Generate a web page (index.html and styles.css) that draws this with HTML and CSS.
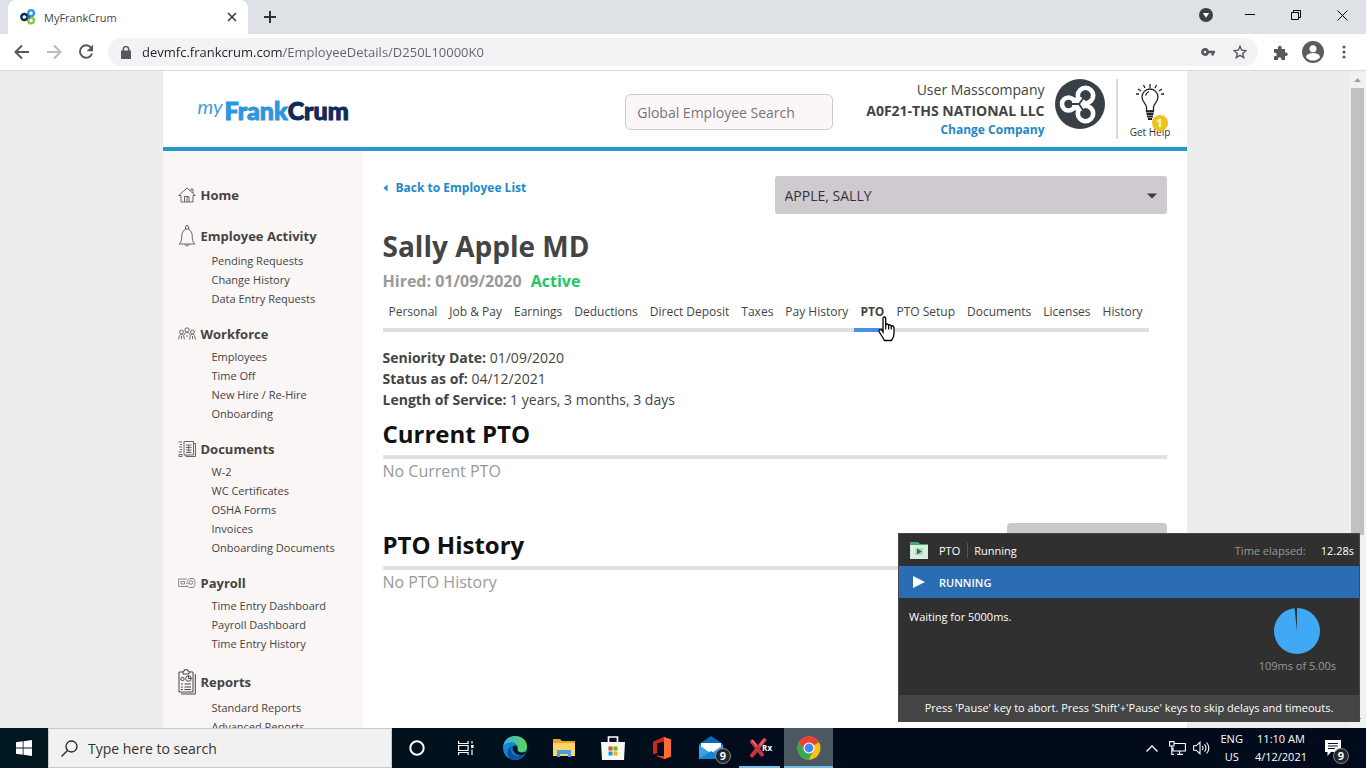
FILE: index.html
```html
<!DOCTYPE html>
<html lang="en">
<head>
<meta charset="utf-8">
<title>MyFrankCrum</title>
<link rel="stylesheet" href="styles.css">
</head>
<body>
<div class="desktop">
  <header class="tabstrip">
    <div class="browser-tab">
      <svg class="favicon" width="16" height="16" viewBox="0 0 16 16" fill="none" stroke-width="2.4"><circle cx="11" cy="4.200" r="2.900" stroke="#2f9be0"/><circle cx="11" cy="11.500" r="2.900" stroke="#8cc63f"/><circle cx="4.300" cy="8" r="3" stroke="#12284c"/><path d="M6.500 8h4" stroke="#1c6aa8"/></svg>
      <span class="tab-title">MyFrankCrum</span>
      <button class="bare" aria-label="Close tab"><svg width="10" height="10" viewBox="0 0 10 10" stroke="#3c4043" stroke-width="1.700"><path d="M1 1l8 8M9 1l-8 8"/></svg></button>
    </div>
    <button class="bare new-tab" aria-label="New tab"><svg width="14" height="14" viewBox="0 0 14 14" stroke="#303134" stroke-width="2"><path d="M7 1v12M1 7h12"/></svg></button>
    <div class="window-controls">
      <button class="bare" aria-label="Search tabs"><svg width="14" height="14" viewBox="0 0 14 14"><circle cx="7" cy="7" r="7" fill="#3c4043"/><path d="M3.800 5h6.400L7 9.800z" fill="#fff"/></svg></button>
      <button class="bare" aria-label="Minimize"><svg width="10" height="10" viewBox="0 0 10 10"><path d="M0 4.500h10" stroke="#000"/></svg></button>
      <button class="bare" aria-label="Restore"><svg width="10" height="10" viewBox="0 0 10 10" fill="none" stroke="#000"><path d="M.5 2.500h7v7h-7zM2.500 2.500v-2h7v7h-2"/></svg></button>
      <button class="bare" aria-label="Close"><svg width="11" height="11" viewBox="0 0 11 11" stroke="#000"><path d="M.5.5l10 10M10.500.5l-10 10"/></svg></button>
    </div>
  </header>

  <div class="toolbar">
    <div class="nav-buttons">
      <button class="bare" aria-label="Back"><svg width="16" height="16" viewBox="0 0 16 16" fill="none" stroke="#55585c" stroke-width="2"><path d="M15 8H2M8 1.500L1.500 8 8 14.500"/></svg></button>
      <button class="bare" aria-label="Forward"><svg width="16" height="16" viewBox="0 0 16 16" fill="none" stroke="#b9bbbe" stroke-width="2"><path d="M1 8h13M8 1.500L14.500 8 8 14.500"/></svg></button>
      <button class="bare" aria-label="Reload"><svg width="16" height="16" viewBox="0 0 16 16"><path d="M13.200 4A6.200 6.200 0 1 0 14 9.500" fill="none" stroke="#55585c" stroke-width="2"/><path d="M15 .8v6.400H8.600z" fill="#55585c"/></svg></button>
    </div>
    <div class="omnibox">
      <svg width="10" height="13" viewBox="0 0 10 13"><path d="M0 4.500h10V13H0z" fill="#55585c"/><path d="M2.300 5V3.300a2.700 2.700 0 0 1 5.400 0V5" fill="none" stroke="#55585c" stroke-width="1.500"/></svg>
      <input class="address" type="text" aria-label="Address" value="devmfc.frankcrum.com/EmployeeDetails/D250L10000K0">
      <button class="bare" aria-label="Passwords"><svg width="14" height="10" viewBox="0 0 14 10" fill="none" stroke="#55585c"><circle cx="4" cy="5" r="2.600" stroke-width="2.600"/><path d="M6.500 5H14M11.700 5v3.500" stroke-width="2.500"/></svg></button>
      <button class="bare" aria-label="Bookmark"><svg width="14" height="14" viewBox="0 0 14 14" fill="none" stroke="#55585c" stroke-width="1.400"><path d="M7 1.300l1.700 3.900 4.200.4-3.200 2.800 1 4.100L7 10.300l-3.700 2.200 1-4.100L1.100 5.600l4.200-.4z"/></svg></button>
    </div>
    <div class="browser-actions">
      <button class="bare" aria-label="Extensions"><svg width="15" height="15" viewBox="0 0 15 15" fill="#55585c"><path d="M1 4h4V2.600a1.800 1.800 0 0 1 3.600 0V4H12v3.500h1a1.800 1.800 0 0 1 0 3.600h-1V15H8.400v-1a1.700 1.700 0 0 0-3.400 0v1H1v-3.700h1a1.800 1.800 0 0 0 0-3.600H1z"/></svg></button>
      <button class="bare" aria-label="Profile"><svg width="22" height="22" viewBox="0 0 22 22"><circle cx="11" cy="11" r="11" fill="#5a5d61"/><circle cx="11" cy="7.700" r="3.500" fill="#fff"/><path d="M4 16.200c0-3 4.500-4.200 7-4.200s7 1.200 7 4.200a9 9 0 0 1-14 0z" fill="#fff"/></svg></button>
      <button class="bare" aria-label="Menu"><svg width="4" height="14" viewBox="0 0 4 14" fill="#55585c"><circle cx="2" cy="2" r="1.500"/><circle cx="2" cy="7" r="1.500"/><circle cx="2" cy="12" r="1.500"/></svg></button>
    </div>
  </div>

  <div class="viewport">
    <div class="page">
      <header class="site-header">
        <a class="logo" href="#"><span class="logo-my">my</span><span class="logo-frank">Frank</span><span class="logo-crum">Crum</span></a>
        <input class="global-search" type="search" aria-label="Global Employee Search" placeholder="Global Employee Search">
        <div class="account">
          <span>User Masscompany</span>
          <strong>A0F21-THS NATIONAL LLC</strong>
          <a class="link" href="#">Change Company</a>
        </div>
        <svg class="brand" width="50" height="50" viewBox="0 0 50 50"><circle cx="25" cy="25" r="25" fill="#384047"/><g fill="none" stroke="#fff" stroke-width="4.600"><circle cx="30.500" cy="16.500" r="7.700"/><circle cx="30.500" cy="34.500" r="7.700"/><circle cx="13.500" cy="25" r="6.500"/></g><path d="M17 19l9-1 8 7-8 7-9-1z" fill="#fff"/><g fill="#384047"><circle cx="30.500" cy="16.500" r="3.700"/><circle cx="30.500" cy="34.500" r="3.700"/><circle cx="13.500" cy="25" r="3.700"/></g><path d="M14 25h10l6-8M24 25l6 9" fill="none" stroke="#384047" stroke-width="1.800"/></svg>
        <a class="help" href="#">
          <svg width="30" height="38" viewBox="0 0 30 38" fill="none" stroke="#222" stroke-width="1.300"><path d="M11.500 28v-4c0-3-4.500-5-4.500-10a8 8 0 0 1 16 0c0 5-4.500 7-4.500 10v4zM10.500 12.500q1-3 3.500-4"/><path d="M15 1v4M8.500 2l1.500 3M21.500 2L20 5M3 6l3 2M27 6l-3 2M1 11h3M26 11h3"/><path d="M11 28.500h8M11.500 31h7M12 33.500h6" stroke-width="2"/><path d="M13 36h4" stroke-width="2"/></svg>
          <span>Get Help</span>
          <b class="help-badge">1</b>
        </a>
      </header>

      <div class="columns">
        <nav class="sidebar">
          <section>
            <h3 class="home-heading"><svg width="18" height="16" viewBox="0 0 18 16" class="line-icon"><path d="M.7 8.500L9 1l8.300 7.500H15V15H3V8.500zM6.500 15V9.500h4.500V15M9 10v5M13 4V2h2v4"/></svg><a href="#">Home</a></h3>
          </section>
          <section>
            <h3><svg width="18" height="24" viewBox="0 0 18 24" class="line-icon"><path d="M7.500 5V3a1.500 1.500 0 0 1 3 0v2M1 20c2.500-2 2.500-4 2.800-8C4 8 6 5 9 5s5 3 5.200 7c.3 4 .3 6 2.800 8zM6.500 20.500q2.500 3 5 0"/></svg><a href="#">Employee Activity</a></h3>
            <ul><li><a href="#">Pending Requests</a></li><li><a href="#">Change History</a></li><li><a href="#">Data Entry Requests</a></li></ul>
          </section>
          <section>
            <h3><svg width="18" height="14" viewBox="0 0 18 14" class="line-icon"><circle cx="9" cy="3" r="2.200"/><circle cx="3.500" cy="5" r="1.900"/><circle cx="14.500" cy="5" r="1.900"/><path d="M.7 12.500c0-7 5.600-7 5.600 0M11.700 12.500c0-7 5.600-7 5.600 0M6 8c1-3.500 5-3.500 6 0M3.500 9v3M14.500 9v3M8 9h2"/></svg><a href="#">Workforce</a></h3>
            <ul><li><a href="#">Employees</a></li><li><a href="#">Time Off</a></li><li><a href="#">New Hire / Re-Hire</a></li><li><a href="#">Onboarding</a></li></ul>
          </section>
          <section>
            <h3><svg width="18" height="18" viewBox="0 0 18 18" class="line-icon"><path d="M6 1.500h9.500V15H6zM15.500 3.500h2v13H8V15M8 5h5.500M8 7.500h5.500M8 10h5.500M8 12.500h5.500M10.700 5v7.500"/><path d="M.5 2h3.500M2 4.500h2M1 7h3M2 9.500h2M.5 12h3.500M1 14.500h3v2H1z"/></svg><a href="#">Documents</a></h3>
            <ul><li><a href="#">W-2</a></li><li><a href="#">WC Certificates</a></li><li><a href="#">OSHA Forms</a></li><li><a href="#">Invoices</a></li><li><a href="#">Onboarding Documents</a></li></ul>
          </section>
          <section>
            <h3><svg width="18" height="12" viewBox="0 0 18 12" class="line-icon light"><path d="M9 2H.7v7.500H10M3 4.500h3.500v2.500H3zM8.500 4.500l3.500-3h3.500q3.200 4.500 0 9h-4L8.500 8.500M8 6.500q2-1.500 3.500.5"/><circle cx="13" cy="5.500" r="1.800"/></svg><a href="#">Payroll</a></h3>
            <ul><li><a href="#">Time Entry Dashboard</a></li><li><a href="#">Payroll Dashboard</a></li><li><a href="#">Time Entry History</a></li></ul>
          </section>
          <section>
            <h3><svg width="18" height="26" viewBox="0 0 18 26" class="line-icon dark"><path d="M5 3H1v20h14V3h-4M5 5V2h1.500V.7h3V2H11v3zM17.300 5v20H3"/><circle cx="4.500" cy="10" r="1.700"/><circle cx="10.500" cy="9.500" r="2.800"/><path d="M10.500 7v2.500H13M3 15h2M6.500 15H13M3 18h2M6.500 18H13M3 20.500h2M6.500 20.500H13"/></svg><a href="#">Reports</a></h3>
            <ul><li><a href="#">Standard Reports</a></li><li><a href="#">Advanced Reports</a></li></ul>
          </section>
        </nav>

        <main class="content">
          <div class="top-row">
            <a class="link back" href="#"><svg width="5" height="8" viewBox="0 0 5 8"><path d="M4.500.5v7L.5 4z" fill="#2388c9"/></svg>Back to Employee List</a>
            <div class="picker">
              <select aria-label="Employee"><option>APPLE, SALLY</option></select>
              <svg width="10" height="6" viewBox="0 0 10 6"><path d="M0 .5h10L5 5.500z" fill="#3b3b3b"/></svg>
            </div>
          </div>
          <h1>Sally Apple MD</h1>
          <p class="hired">Hired: 01/09/2020 <span>Active</span></p>
          <nav class="tabs">
            <a href="#">Personal</a><a href="#">Job &amp; Pay</a><a href="#">Earnings</a><a href="#">Deductions</a><a href="#">Direct Deposit</a><a href="#">Taxes</a><a href="#">Pay History</a><a class="active" href="#" aria-current="page">PTO
              <svg class="cursor" width="18" height="26" viewBox="0 0 18 26"><path d="M5 2.500Q5 1 6.300 1t1.400 1.500V9q.4-1.200 1.600-1t1.300 1.500q.5-1 1.500-.7t1.200 1.500q.6-.8 1.500-.4T16 11.500V18q0 3-2.500 6.500h-7L5 22 1.300 16q-.8-1.500.3-2.200T4 14.500L5 16z" fill="#fff" stroke="#000" stroke-width="1.300"/><path d="M7.700 9v4.500M10.600 9.500v4M13.300 10.500v3" stroke="#000" stroke-width="1.200"/></svg></a><a href="#">PTO Setup</a><a href="#">Documents</a><a href="#">Licenses</a><a href="#">History</a>
          </nav>
          <div class="facts">
            <p><strong>Seniority Date:</strong> 01/09/2020</p>
            <p><strong>Status as of:</strong> 04/12/2021</p>
            <p><strong>Length of Service:</strong> 1 years, 3 months, 3 days</p>
          </div>
          <section class="block">
            <div class="block-head"><h2>Current PTO</h2></div>
            <p>No Current PTO</p>
          </section>
          <section class="block history">
            <div class="block-head"><h2>PTO History</h2><button class="history-action" aria-label="PTO History options"></button></div>
            <p>No PTO History</p>
          </section>
        </main>
      </div>
    </div>
    <div class="scrollbar">
      <svg width="9" height="17" viewBox="0 0 9 17"><path d="M1 11h7L4.500 7z" fill="#a3a3a3"/></svg>
      <div class="thumb"></div>
      <svg class="down" width="9" height="17" viewBox="0 0 9 17"><path d="M1 7h7L4.500 11z" fill="#505050"/></svg>
    </div>
  </div>

  <aside class="runner">
    <div class="runner-title">
      <svg width="18" height="17" viewBox="0 0 18 17"><path d="M0 0h8l2 2h8v14H0z" fill="#3fae6e"/><path d="M0 3h18v14H0z" fill="#d8efdf"/><path d="M5 6h8v7H5z" fill="#b5d9c1"/><path d="M7 6.500l5 3-5 3z" fill="#3a6b4c"/></svg>
      <span class="runner-name">PTO</span><span class="runner-state">Running</span>
      <span class="elapsed">Time elapsed:</span><span>12.28s</span>
    </div>
    <div class="runner-status"><svg width="12" height="12" viewBox="0 0 12 12"><path d="M0 0l12 6-12 6z" fill="#fff"/></svg>RUNNING</div>
    <div class="runner-body">
      <p>Waiting for 5000ms.</p>
      <div class="progress">
        <svg width="46" height="46" viewBox="0 0 46 46"><circle cx="23" cy="23" r="23" fill="#3fa9f5"/><path d="M23 23L20.500 0H23z" fill="#303030"/></svg>
        <span>109ms of 5.00s</span>
      </div>
    </div>
    <div class="runner-foot">Press 'Pause' key to abort. Press 'Shift'+'Pause' keys to skip delays and timeouts.</div>
  </aside>

  <footer class="taskbar">
    <button class="bare start" aria-label="Start"><svg width="16" height="16" viewBox="0 0 16 16" fill="#fff"><path d="M0 2.300L6.700 1.300v6.300H0zM7.500 1.200L16 0v7.600H7.500zM0 8.400h6.700v6.300L0 13.700zM7.500 8.400H16V16l-8.500-1.200z"/></svg></button>
    <label class="task-search"><svg width="17" height="17" viewBox="0 0 17 17" fill="none" stroke="#222" stroke-width="1.300"><circle cx="10.500" cy="6.500" r="5.500"/><path d="M6.500 10.500L.5 16.500"/></svg><input type="search" aria-label="Type here to search" placeholder="Type here to search"></label>
    <div class="apps">
      <button class="bare" aria-label="Cortana"><svg width="16" height="16" viewBox="0 0 16 16"><circle cx="8" cy="8" r="6.700" fill="none" stroke="#fff" stroke-width="2"/></svg></button>
      <button class="bare" aria-label="Task view"><svg width="16" height="16" viewBox="0 0 16 16" fill="none" stroke="#fff" stroke-width="1.200"><path d="M.6 1v2.500h9.500V1M.6 5.500h9.500v5H.6zM.6 15v-2.500h9.500V15M14 1v2.500M14 9.500V15"/><path d="M13 5h2.500v3H13z" fill="#fff" stroke="none"/></svg></button>
      <button class="bare" aria-label="Edge"><svg width="24" height="24" viewBox="0 0 24 24"><defs><linearGradient id="e1" x1="0" y1="0" x2="1" y2="0"><stop offset="0" stop-color="#35b5ee"/><stop offset="1" stop-color="#63d54c"/></linearGradient></defs><circle cx="12" cy="12" r="12" fill="#1485d8"/><path d="M.3 10C2 3 7-.2 12.500 0 19.500.3 24 5 24 10.500c0 4-3 5.800-6.500 5.800-2.800 0-4-1.200-3.200-2.300C17 10 12 5 6.500 6.500 3 7.300 1 9 .3 10z" fill="url(#e1)"/><path d="M9 10c-3 5 1 10 7 10 3 0 4.500-1 6-2-3 5-8.500 6.700-13 5.500C4 22 2 14 9 10z" fill="#0c4f9c"/><path d="M9.500 12c0-3.500 5.500-3 5 .5-.5 2.500 2 4 5.500 4l3-.7-1 2.200c-5 3.500-12.500 0-12.500-6z" fill="#031823"/></svg></button>
      <button class="bare" aria-label="File Explorer"><svg width="22" height="20" viewBox="0 0 22 20"><path d="M0 1h7l2 2h13v4H0z" fill="#e6a528"/><path d="M0 5h22v13H0z" fill="#ffd56b"/><path d="M4 12h14v7h-3v-3H7v3H4z" fill="#4a9de0"/></svg></button>
      <button class="bare" aria-label="Store"><svg width="24" height="24" viewBox="0 0 24 24"><path d="M7.500 6V1h9v5" fill="none" stroke="#fff" stroke-width="1.700"/><path d="M0 6h24l-1 18H1z" fill="#f7f7f7"/><path d="M7.500 10.500h4v4h-4z" fill="#e44c22"/><path d="M12.500 10.500h4v4h-4z" fill="#7bb300"/><path d="M7.500 15.500h4v4h-4z" fill="#00a1ec"/><path d="M12.500 15.500h4v4h-4z" fill="#fbb400"/></svg></button>
      <button class="bare" aria-label="Office"><svg width="20" height="22" viewBox="0 0 20 22"><path d="M12 0l7 2.500v17L12 22l-9-3.500 9 .8V4.500L5 6v10l-4 1V5z" fill="#e8401c"/><path d="M12 0l7 2.500v17L12 22z" fill="#ff6a35"/><path d="M12 0L1 5v12l4-1V6l7-1.500z" fill="#c9281b"/></svg></button>
      <button class="bare app-mail" aria-label="Mail"><svg width="24" height="24" viewBox="0 0 24 24"><path d="M0 8L12 0l12 8v15H0z" fill="#0a69b8"/><path d="M2 7h20v5l-10 6L2 12z" fill="#fff"/><path d="M0 9l12 8.500L24 9v14H0z" fill="#36a2ea"/><path d="M0 23L12 15l12 8z" fill="#1683d2"/></svg><b class="count">9</b></button>
      <button class="bare running" aria-label="Rx"><svg width="22" height="22" viewBox="0 0 22 22" stroke="#c9333f" stroke-width="4" stroke-linecap="round"><path d="M3 4.500l10 13M15.500 3L3 18.500"/><path d="M3.500 3.500l4 5M15 3l-4 5" stroke="#ef7680" stroke-width="1.500"/></svg><b class="rx">Rx</b></button>
      <button class="bare running current" aria-label="Chrome"><svg width="24" height="24" viewBox="0 0 24 24"><circle cx="12" cy="12" r="11.500" fill="#fbc116"/><path d="M12 12L2 6.300A11.500 11.500 0 0 1 22 6.300z" fill="#ea4335"/><path d="M12 6.300h10a11.500 11.500 0 0 0-20 0L7 15z" fill="#ea4335"/><path d="M2 6.300A11.500 11.500 0 0 0 11.500 23.500L17 14.500 7 14.800z" fill="#34a853"/><circle cx="12" cy="12" r="5.600" fill="#fff"/><circle cx="12" cy="12" r="4.400" fill="#4285f4"/></svg></button>
    </div>
    <div class="tray">
      <button class="bare" aria-label="Show hidden icons"><svg width="12" height="7" viewBox="0 0 12 7" fill="none" stroke="#fff" stroke-width="1.300"><path d="M.5 6.500L6 1l5.500 5.500"/></svg></button>
      <button class="bare" aria-label="Network"><svg width="17" height="14" viewBox="0 0 17 14" fill="none" stroke="#fff" stroke-width="1.100"><path d="M5.500 2.500h10.900v7.500H4V6.500M8 13.400h6M10.500 10v3M.6.600h4.400v4.400H.6zM2.800 5v8.400H5"/></svg></button>
      <button class="bare" aria-label="Volume"><svg width="17" height="14" viewBox="0 0 17 14" fill="none" stroke="#fff" stroke-width="1.100"><path d="M.6 4.800h2.600L7 1.300v11.400L3.200 9.200H.6zM9.300 5q1.500 2 0 4M11.500 3.300q3 3.700 0 7.400M13.600 1.500q4.500 5.500 0 11"/></svg></button>
      <div class="stack"><span>ENG</span><span>US</span></div>
      <div class="stack clock"><span>11:10 AM</span><span>4/12/2021</span></div>
      <button class="bare notify" aria-label="Notifications"><svg width="16" height="16" viewBox="0 0 16 16"><path d="M0 0h16v12H6l-3.500 4v-4H0z" fill="#fff"/><path d="M3 3.500h10M3 6h10M3 8.500h7" stroke="#04121f"/></svg><b class="count">9</b></button>
    </div>
  </footer>
</div>
</body>
</html>
```

FILE: styles.css
```css
* { box-sizing: border-box; }
body { margin: 0; font-family: "Open Sans", "Noto Sans", sans-serif; color: #444; }
h1, h2, h3, p, ul { margin: 0; padding: 0; }
ul { list-style: none; }
a { color: inherit; text-decoration: none; }
svg { display: block; flex: none; }
.bare { display: flex; align-items: center; justify-content: center; padding: 0; border: 0; background: none; color: inherit; font: inherit; }
.desktop { display: flex; flex-direction: column; height: 100vh; overflow: hidden; position: relative; }

/* Browser frame */
.tabstrip { display: flex; align-items: center; flex: none; height: 34px; padding-left: 8px; background: #dee1e6; }
.browser-tab { display: flex; align-items: center; gap: 8px; width: 240px; height: 34px; padding: 0 11px 0 12px; border-radius: 8px 8px 0 0; background: #fff; font-size: 11px; }
.tab-title { flex: 1; }
.new-tab { margin-left: 15px; }
.window-controls { display: flex; align-items: center; gap: 36px; margin-left: auto; padding: 0 18px 4px 0; }
.window-controls .bare:first-child { margin-right: -4px; }
.toolbar { display: flex; align-items: center; flex: none; height: 37px; border-bottom: 1px solid #d9d9d9; background: #fff; }
.nav-buttons { display: flex; gap: 16px; padding: 0 14px; }
.omnibox { display: flex; align-items: center; gap: 18px; flex: 1; height: 28px; padding: 0 11px 0 13px; border-radius: 14px; background: #f1f3f4; }
.address { flex: 1; min-width: 0; margin-left: -7px; padding: 0; border: 0; outline: 0; font: 13px "Open Sans", sans-serif; background: linear-gradient(90deg, #202124 141px, #5f6368 141px); background-clip: text; color: transparent; }
.browser-actions { display: flex; align-items: center; gap: 14px; padding: 0 20px 0 15px; }
.browser-actions .bare:last-child { margin-left: 4px; }

/* Page */
.viewport { display: flex; flex: 1; min-height: 0; background: #ededed; }
.page { flex: 1; max-width: 1024px; margin: 0 auto; display: flex; flex-direction: column; overflow: hidden; background: #fff; }
.site-header { display: flex; align-items: flex-start; flex: none; height: 80px; padding: 8px 15px 0 35px; border-bottom: 4px solid #2998c9; }
.logo { display: flex; align-items: baseline; margin-top: 13px; font: 900 25px/36px Lato, sans-serif; }
.logo-my { align-self: flex-start; margin-right: 2px; font: italic 400 20px/28px Lato, sans-serif; color: #3aa0dc; }
.logo-frank { color: #2c97dc; -webkit-text-stroke: 1px #2c97dc; }
.logo-crum { color: #14285a; -webkit-text-stroke: 1px #14285a; }
.global-search { width: 208px; height: 36px; margin: 15px 33px 0 auto; padding: 0 11px; border: 1px solid #cfc9cc; border-radius: 6px; background: #fdf6f8; font: 14px "Open Sans", sans-serif; }
.global-search::placeholder { color: #757575; opacity: 1; }
.account { display: flex; flex-direction: column; align-items: flex-end; font-size: 14px; line-height: 21px; white-space: nowrap; }
.link { color: #2388c9; font-size: 12px; font-weight: 700; }
.account .link { line-height: 18px; }
.brand { margin: 0 10px; }
.help { display: flex; flex-direction: column; align-items: center; gap: 4px; position: relative; width: 56px; height: 60px; margin-left: 1px; padding: 4px 0 0 11px; border-left: 2px solid #d9d9d9; color: #333; font-size: 10px; line-height: 14px; white-space: nowrap; }
.help-badge { position: absolute; right: 4px; top: 36px; width: 16px; height: 16px; border-radius: 50%; background: rgba(235, 190, 0, .9); color: #fff; font-size: 11px; line-height: 15px; text-align: center; }
.columns { display: flex; flex: 1; min-height: 0; }
.sidebar { display: flex; flex-direction: column; gap: 16px; flex: none; width: 200px; padding: 31px 0 0 15px; background: #faf6f6; }
.sidebar h3 { display: flex; align-items: center; gap: 5px; min-height: 20px; margin-bottom: 3px; font-size: 13px; line-height: 20px; }
.sidebar .home-heading { min-height: 26px; margin: 0; }
.sidebar ul { padding-left: 34px; font-size: 11px; line-height: 19px; }
.line-icon { fill: none; stroke: #666; stroke-width: 1; }
.line-icon.light { stroke: #888; }
.line-icon.dark { stroke: #444; }
.content { flex: 1; min-width: 0; padding: 25px 20px 0; }
.top-row { display: flex; justify-content: space-between; align-items: flex-start; }
.back { display: flex; align-items: center; gap: 8px; line-height: 24px; }
.picker { position: relative; width: 50%; }
.picker select { display: block; width: 100%; height: 38px; padding: 0 10px; appearance: none; border: 0; border-radius: 3px; background: #cfcacf; color: #333; font: 14px "Open Sans", sans-serif; }
.picker svg { position: absolute; right: 10px; top: 17px; }
h1 { margin-top: 13px; font-size: 28px; line-height: 38px; font-weight: 700; }
.hired { margin-top: 4px; font-size: 16px; line-height: 24px; font-weight: 700; color: #999; }
.hired span { margin-left: 5px; color: #1dc763; }
.tabs { display: flex; width: fit-content; margin-top: 8px; border-bottom: 4px solid #e0e0e0; font-size: 12px; line-height: 22px; white-space: nowrap; }
.tabs a { position: relative; padding: 0 6px 5px; }
.tabs .active { margin-bottom: -4px; border-bottom: 4px solid #4a90e2; font-weight: 700; }
.cursor { position: absolute; left: 24px; top: 15px; z-index: 1; }
.facts { margin-top: 15px; font-size: 14px; line-height: 21px; }
.facts strong { font-weight: 700; }
.block { margin-top: 6px; }
.block-head { display: flex; align-items: flex-end; justify-content: space-between; padding-bottom: 3px; border-bottom: 4px solid #e0e0e0; }
h2 { font-size: 24px; line-height: 36px; font-weight: 700; color: #111; }
.block p { font-size: 16px; line-height: 24px; color: #999; }
.history { margin-top: 40px; }
.history-action { width: 160px; height: 40px; border: 0; border-radius: 4px; background: #c9c9c9; }
.scrollbar { display: flex; flex-direction: column; align-items: center; flex: none; width: 17px; background: #f1f1f1; }
.scrollbar .thumb { width: 13px; height: 68%; background: #c1c1c1; }
.scrollbar .down { margin-top: auto; }

/* Automation status window */
.runner { position: absolute; right: 6px; bottom: 46px; display: flex; flex-direction: column; width: 462px; height: 189px; border: 1px solid #484848; background: #303030; color: #fff; font-size: 11px; }
.runner-title { display: flex; align-items: center; flex: none; height: 32px; padding: 0 5px 0 11px; }
.runner-name { margin-left: 11px; padding-right: 7px; border-right: 1px solid #555; }
.runner-state { padding-left: 6px; }
.elapsed { margin: 0 15px 0 auto; color: #999; }
.runner-status { display: flex; align-items: center; gap: 14px; flex: none; height: 32px; padding-left: 14px; background: #2a6db5; font-weight: 600; }
.runner-body { display: flex; justify-content: space-between; flex: 1; padding: 10px 23px 0 10px; }
.runner-body p { line-height: 18px; }
.progress { display: flex; flex-direction: column; align-items: center; gap: 4px; color: #999; }
.runner-foot { flex: none; height: 26px; background: #444; line-height: 26px; text-align: center; }

/* Taskbar */
.taskbar { display: flex; flex: none; height: 40px; background: linear-gradient(90deg, #001821, #020b1b 60%); color: #fff; }
.start { width: 48px; }
.task-search { display: flex; align-items: center; gap: 10px; width: 344px; padding-left: 12px; border: 1px solid #c8c8c8; background: #f1f1f1; }
.task-search input { flex: 1; min-width: 0; padding: 0; border: 0; outline: 0; background: none; font: 14px "Open Sans", sans-serif; }
.task-search input::placeholder { color: #333; opacity: 1; }
.apps { display: flex; }
.apps .bare { position: relative; width: 49px; }
.apps .running { border-bottom: 2px solid #76b9ed; padding-top: 2px; }
.apps .running:not(.current) { width: 41px; margin: 0 4px; }
.apps .current { background-color: #4b5761; }
.count { position: absolute; right: 0; bottom: 4px; width: 16px; height: 16px; border: 1px solid #888; border-radius: 50%; background: #20252c; font-size: 11px; line-height: 14px; text-align: center; }
.app-mail .count { right: 4px; }
.rx { position: absolute; right: 8px; top: 14px; font-size: 8px; line-height: 12px; }
.tray { display: flex; align-items: center; gap: 7px; margin-left: auto; padding-right: 17px; }
.tray .bare:first-child { margin-right: 4px; }
.stack { display: flex; flex-direction: column; align-items: center; margin-left: 3px; font-size: 11px; line-height: 18px; }
.clock { margin-left: 5px; }
.notify { position: relative; width: 24px; height: 40px; margin-left: 11px; padding-right: 8px; }
```
